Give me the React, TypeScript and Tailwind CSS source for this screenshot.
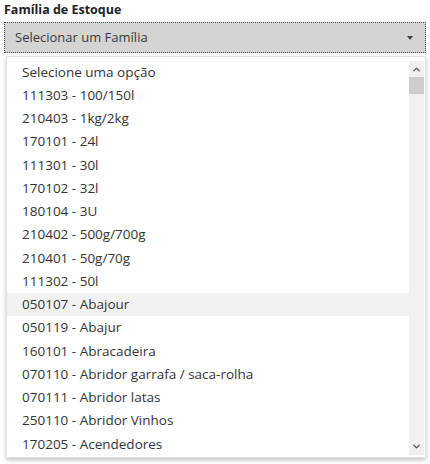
import { ChevronUp, ChevronDown } from 'lucide-react';

const OPTIONS = [
  'Selecione uma opção',
  '111303 - 100/150l',
  '210403 - 1kg/2kg',
  '170101 - 24l',
  '111301 - 30l',
  '170102 - 32l',
  '180104 - 3U',
  '210402 - 500g/700g',
  '210401 - 50g/70g',
  '111302 - 50l',
  '050107 - Abajour',
  '050119 - Abajur',
  '160101 - Abracadeira',
  '070110 - Abridor garrafa / saca-rolha',
  '070111 - Abridor latas',
  '250110 - Abridor Vinhos',
  '170205 - Acendedores',
];

export default function App() {
  return (
    <div className="w-[430px] h-[464px] bg-white overflow-hidden font-['Open_Sans',sans-serif] text-[13px] text-[#333]">
      <div className="pl-[4px] pt-[1px] h-[22px] font-bold text-[12.5px] text-[#222] leading-[18px]">
        Família de Estoque
      </div>

      {/* select */}
      <div className="ml-[4px] w-[422px] h-[31px] bg-[#d4d4d4] border border-dotted border-[#444] flex items-center pl-[10px] pr-[12px]">
        <span className="flex-1 text-[13px] text-[#3a3a3a]">Selecionar um Família</span>
        <span className="w-0 h-0 border-l-[3px] border-r-[3px] border-t-[4px] border-l-transparent border-r-transparent border-t-[#444]" />
      </div>

      {/* dropdown list */}
      <div className="ml-[6px] mt-[3px] w-[420px] h-[402px] bg-white border border-[#e2e2e2] shadow-[0_2px_4px_rgba(0,0,0,0.25)] pt-[3px] pb-[2px] flex">
        <div className="flex-1 overflow-hidden">
          {OPTIONS.map((o) => (
            <div
              key={o}
              className={`h-[23.25px] flex items-center pl-[15px] text-[13.5px] text-[#333] whitespace-nowrap ${
                o === '050107 - Abajour' ? 'bg-[#f2f2f2]' : ''
              }`}
            >
              {o}
            </div>
          ))}
        </div>

        {/* scrollbar */}
        <div className="w-[15px] mr-[1px] mt-[1px] bg-[#f0f0f0] flex flex-col">
          <div className="h-[16px] flex items-center justify-center text-[#555]">
            <ChevronUp size={11} strokeWidth={3} />
          </div>
          <div className="h-[17px] bg-[#cdcdcd]" />
          <div className="flex-1" />
          <div className="h-[17px] flex items-center justify-center text-[#555]">
            <ChevronDown size={11} strokeWidth={3} />
          </div>
        </div>
      </div>
    </div>
  );
}
